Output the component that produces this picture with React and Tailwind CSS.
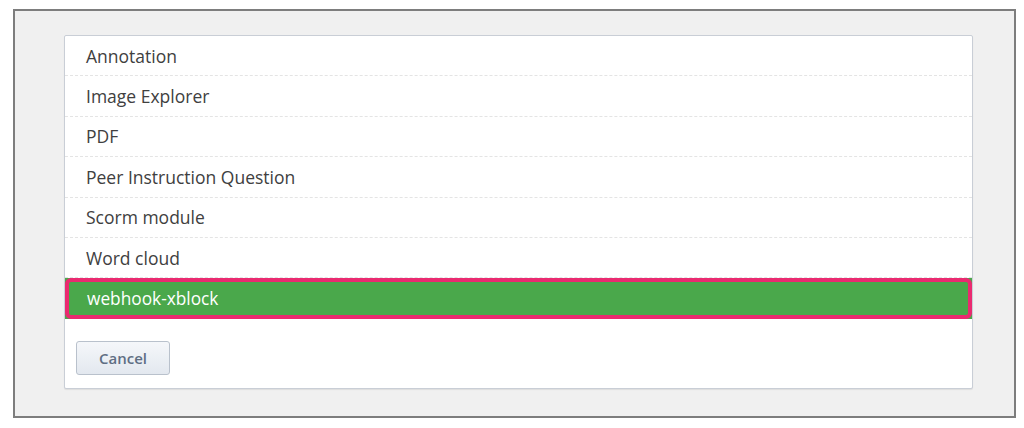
import React from 'react';

const items = [
  'Annotation',
  'Image Explorer',
  'PDF',
  'Peer Instruction Question',
  'Scorm module',
  'Word cloud',
];

export default function App() {
  return (
    <div className="w-[1024px] h-[428px] bg-white pt-[9px] pl-[13px] font-['Open_Sans',sans-serif]">
      <div className="w-[1003px] h-[409px] border-2 border-[#7d7d7d] bg-[#f0f0f0] pt-[24px] pl-[49px]">
        <div className="w-[909px] h-[354px] bg-white border border-[#c9ced6] rounded-[2px] shadow-[0_1px_1px_rgba(0,0,0,0.08)] flex flex-col">
          {items.map((item) => (
            <div
              key={item}
              className="h-[40.4px] flex items-center pl-[21px] border-b border-dashed border-[#e4e4e4] text-[17.5px] text-[#404040]"
            >
              {item}
            </div>
          ))}
          <div className="h-[41px] bg-[#4aa84b] flex items-stretch">
            <div className="flex-1 border-4 border-[#ea2a70] rounded-[6px] flex items-center pl-[18px] text-[17.3px] font-medium text-white">
              webhook-xblock
            </div>
          </div>
          <div className="pt-[22px] pl-[11px]">
            <button className="w-[94px] h-[34px] rounded-[3px] border border-[#b9c1cc] bg-gradient-to-b from-[#f5f7fa] to-[#e3e8ef] text-[15px] font-semibold text-[#5f6e83]">
              Cancel
            </button>
          </div>
        </div>
      </div>
    </div>
  );
}
